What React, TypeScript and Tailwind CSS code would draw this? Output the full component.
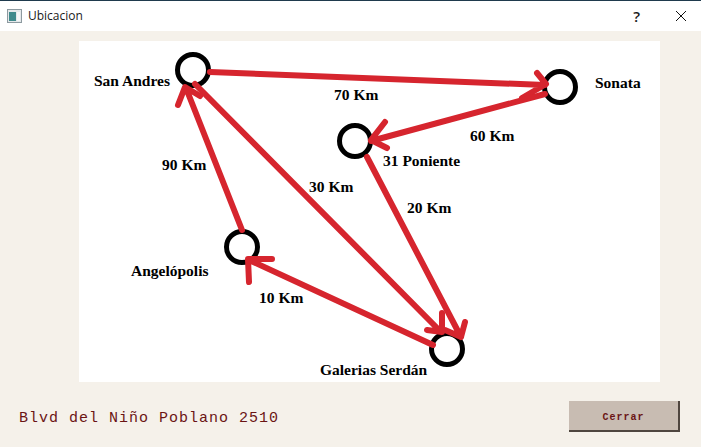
import React from 'react';

const edges = [
  // San Andres -> Sonata
  'M210 72 L545 85 M537 73 L546 84 L522 98',
  // Sonata -> 31 Poniente
  'M545 94 L371 141 M385 122 L371 140 L387 148',
  // 31 Poniente -> Galerias
  'M367 157 L461 337 M465 322 L461 337 L445 330',
  // San Andres -> Galerias
  'M195 84 L441 332 M442 313 L442 332 L427 330',
  // Galerias -> Angelopolis
  'M433 345 L249 260 M272 259 L248 259 L249 282',
  // Angelopolis -> San Andres
  'M242 230 L186 88 M178 105 L185 87 L200 96',
];

const nodes = [
  { cx: 193, cy: 70 },
  { cx: 560, cy: 87 },
  { cx: 355, cy: 141 },
  { cx: 242, cy: 247 },
  { cx: 447, cy: 349 },
];

const labels = [
  { text: 'San Andres', className: 'left-[15px] top-[32px]' },
  { text: 'Sonata', className: 'left-[516px] top-[34px]' },
  { text: '70 Km', className: 'left-[255px] top-[46px]' },
  { text: '60 Km', className: 'left-[391px] top-[87px]' },
  { text: '31 Poniente', className: 'left-[304px] top-[112px]' },
  { text: '90 Km', className: 'left-[83px] top-[116px]' },
  { text: '30 Km', className: 'left-[230px] top-[138px]' },
  { text: '20 Km', className: 'left-[328px] top-[159px]' },
  { text: 'Angelópolis', className: 'left-[52px] top-[222px]' },
  { text: '10 Km', className: 'left-[180px] top-[249px]' },
  { text: 'Galerias Serdán', className: 'left-[241px] top-[321px]' },
];

export default function App() {
  return (
    <div className="flex h-[447px] w-[701px] flex-col overflow-hidden bg-[#f5f1ea]">
      <div className="flex h-[31px] shrink-0 items-center border-t border-[#1f3a4d] bg-white pl-[7px] font-['Open_Sans',sans-serif] text-[12px] text-[#1a1a1a]">
        <svg width="15" height="14" viewBox="0 0 15 14" className="mr-[6px]">
          <rect x="0.5" y="0.5" width="14" height="13" fill="#e4e8ea" stroke="#8d9aa0" />
          <rect x="2" y="3" width="7" height="9" fill="#3f8a8c" />
          <rect x="10" y="3" width="3" height="9" fill="#f4f6f7" />
        </svg>
        <span>Ubicacion</span>
        <span className="ml-auto mr-[35px] text-[15px] font-semibold">?</span>
        <svg width="12" height="12" viewBox="0 0 12 12" className="mr-[14px]">
          <path d="M1 1 L11 11 M11 1 L1 11" stroke="#111" strokeWidth="1" fill="none" />
        </svg>
      </div>

      <div className="ml-[79px] mt-[10px] h-[341px] w-[581px] shrink-0 bg-white">
        <div className="relative h-full w-full font-['Liberation_Serif',serif] text-[15.5px] font-bold leading-4 text-black">
          <svg width="581" height="341" viewBox="79 41 581 341" className="absolute left-0 top-0">
            {nodes.map((n) => (
              <circle key={n.cx} cx={n.cx} cy={n.cy} r="15.5" fill="none" stroke="#000" strokeWidth="5" />
            ))}
            {edges.map((d) => (
              <path key={d} d={d} fill="none" stroke="#d6252e" strokeWidth="6" strokeLinecap="round" strokeLinejoin="round" />
            ))}
          </svg>
          {labels.map((l) => (
            <span key={l.text} className={`absolute whitespace-nowrap ${l.className}`}>
              {l.text}
            </span>
          ))}
        </div>
      </div>

      <div className="mt-[19px] flex items-start justify-between pl-[19px] pr-[21px] font-['Liberation_Mono',monospace] text-[#6b1414]">
        <span className="mt-[7px] text-[15px] tracking-[1px]">Blvd del Niño Poblano 2510</span>
        <button className="h-[31px] w-[111px] border-b-2 border-r-2 border-[#4f463f] bg-[#c8bcb2] pt-[3px] text-[10px] font-bold tracking-[1px] text-[#6b1414]">
          Cerrar
        </button>
      </div>
    </div>
  );
}
